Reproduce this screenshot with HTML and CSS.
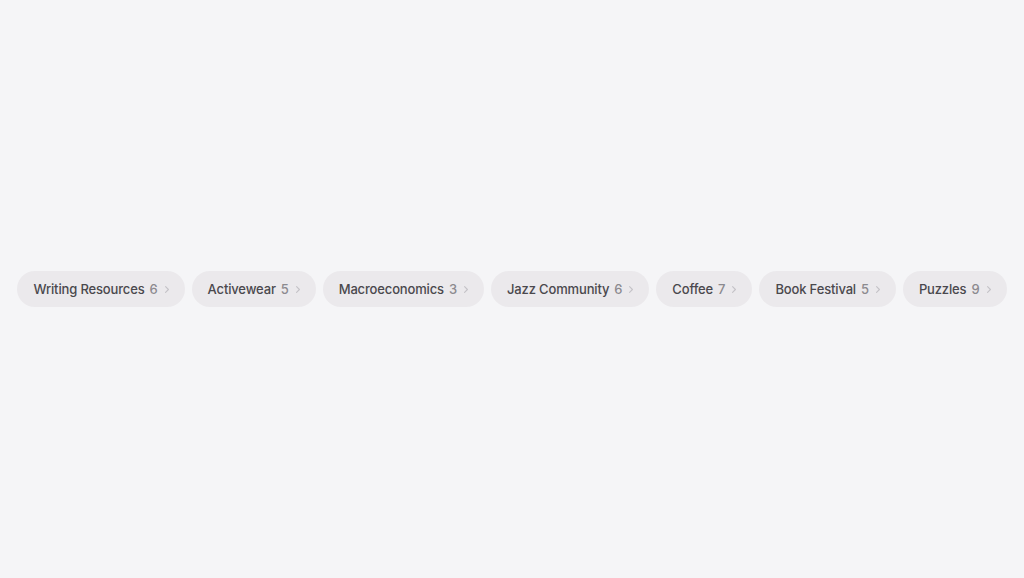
FILE: index.html
```html
<!DOCTYPE html>
<html lang="en">
<head>
<meta charset="utf-8">
<link rel="stylesheet" href="styles.css">
</head>
<body>
<div class="page">
  <div class="chips">
    <a class="chip"><span class="label">Writing Resources</span><span class="count">6</span><svg class="chev" viewBox="0 0 4 7"><path d="M0.6 0.6l2.8 2.9-2.8 2.9"/></svg></a>
    <a class="chip"><span class="label">Activewear</span><span class="count">5</span><svg class="chev" viewBox="0 0 4 7"><path d="M0.6 0.6l2.8 2.9-2.8 2.9"/></svg></a>
    <a class="chip"><span class="label">Macroeconomics</span><span class="count">3</span><svg class="chev" viewBox="0 0 4 7"><path d="M0.6 0.6l2.8 2.9-2.8 2.9"/></svg></a>
    <a class="chip"><span class="label">Jazz Community</span><span class="count">6</span><svg class="chev" viewBox="0 0 4 7"><path d="M0.6 0.6l2.8 2.9-2.8 2.9"/></svg></a>
    <a class="chip"><span class="label">Coffee</span><span class="count">7</span><svg class="chev" viewBox="0 0 4 7"><path d="M0.6 0.6l2.8 2.9-2.8 2.9"/></svg></a>
    <a class="chip"><span class="label">Book Festival</span><span class="count">5</span><svg class="chev" viewBox="0 0 4 7"><path d="M0.6 0.6l2.8 2.9-2.8 2.9"/></svg></a>
    <a class="chip"><span class="label">Puzzles</span><span class="count">9</span><svg class="chev" viewBox="0 0 4 7"><path d="M0.6 0.6l2.8 2.9-2.8 2.9"/></svg></a>
  </div>
</div>
</body>
</html>
```
FILE: styles.css
```css
html, body {
  margin: 0;
  padding: 0;
  background: #f5f5f7;
}
.page {
  height: 578px;
  display: flex;
  align-items: center;
  justify-content: center;
  font-family: Inter, "Noto Sans", sans-serif;
}
.chips {
  display: flex;
  gap: 7px;
}
.chip {
  display: flex;
  align-items: center;
  height: 36px;
  padding: 0 16px 0 16px;
  border-radius: 18px;
  background: #ebe9ec;
  font-size: 13px;
  font-weight: 500;
  letter-spacing: -0.15px;
  color: #4a484d;
  white-space: nowrap;
}
.count {
  margin-left: 5px;
  color: #8c8a8f;
}
.chev {
  width: 4px;
  height: 7px;
  margin-left: 7px;
  fill: none;
  stroke: #c4c2c7;
  stroke-width: 1.1;
  stroke-linecap: round;
  stroke-linejoin: round;
}
```
